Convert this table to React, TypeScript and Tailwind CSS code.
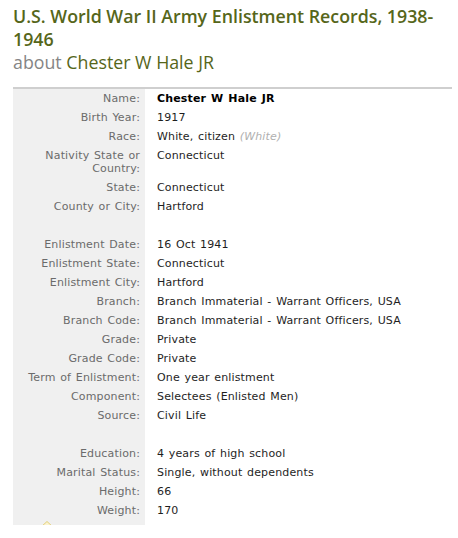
import React from "react";

type Row = { label?: string; value?: React.ReactNode; bold?: boolean };

const rows: Row[] = [
  { label: "Name:", value: "Chester W Hale JR", bold: true },
  { label: "Birth Year:", value: "1917" },
  {
    label: "Race:",
    value: (
      <>
        White, citizen <span className="italic text-[#b0b0b0]">(White)</span>
      </>
    ),
  },
  { label: "Nativity State or Country:", value: "Connecticut" },
  { label: "State:", value: "Connecticut" },
  { label: "County or City:", value: "Hartford" },
  {},
  { label: "Enlistment Date:", value: "16 Oct 1941" },
  { label: "Enlistment State:", value: "Connecticut" },
  { label: "Enlistment City:", value: "Hartford" },
  { label: "Branch:", value: "Branch Immaterial - Warrant Officers, USA" },
  { label: "Branch Code:", value: "Branch Immaterial - Warrant Officers, USA" },
  { label: "Grade:", value: "Private" },
  { label: "Grade Code:", value: "Private" },
  { label: "Term of Enlistment:", value: "One year enlistment" },
  { label: "Component:", value: "Selectees (Enlisted Men)" },
  { label: "Source:", value: "Civil Life" },
  {},
  { label: "Education:", value: "4 years of high school" },
  { label: "Marital Status:", value: "Single, without dependents" },
  { label: "Height:", value: "66" },
  { label: "Weight:", value: "170" },
];

export default function App() {
  return (
    <div className="min-h-[538px] bg-white pl-[13px] pr-[6px] pt-[5px]">
      {/* record title */}
      <h1 className="font-['Open_Sans',sans-serif] text-[17.8px] font-semibold leading-[23px] text-[#56661a] w-[432px]">
        U.S. World War II Army Enlistment Records, 1938-1946
      </h1>
      <div className="font-['Open_Sans',sans-serif] text-[17.8px] leading-[23px] text-[#56661a]">
        <span className="text-[#858585]">about</span> Chester W Hale JR
      </div>

      {/* details table */}
      <div className="mt-[13px] border-t-2 border-[#cfcfcf] font-['DejaVu_Sans',Verdana,sans-serif] text-[11px] leading-[13px] tracking-[0.15px] [word-spacing:1px]">
        <div className="grid grid-cols-[132px_1fr]">
          {rows.map((r, i) => (
            <React.Fragment key={i}>
              <div className="bg-[#f0f0f0] py-[3px] pr-[5px] text-right text-[#6b6b6b] min-h-[19px]">
                {r.label && (
                  <span className={r.label.length > 20 ? "inline-block w-[97px]" : ""}>{r.label}</span>
                )}
              </div>
              <div
                className={
                  "py-[3px] pl-[12px] text-[#1e1e1e] " + (r.bold ? "font-bold text-black" : "")
                }
              >
                {r.value}
              </div>
            </React.Fragment>
          ))}
          <div className="relative h-[5px] bg-[#f0f0f0] overflow-hidden">
            <svg className="absolute left-[27px] top-0" width="14" height="8" viewBox="0 0 14 8">
              <path d="M1 7 L7 1.5 L13 7" fill="#fbf3cf" stroke="#e2cf7a" strokeWidth="1" />
            </svg>
          </div>
          <div />
        </div>
      </div>
    </div>
  );
}
